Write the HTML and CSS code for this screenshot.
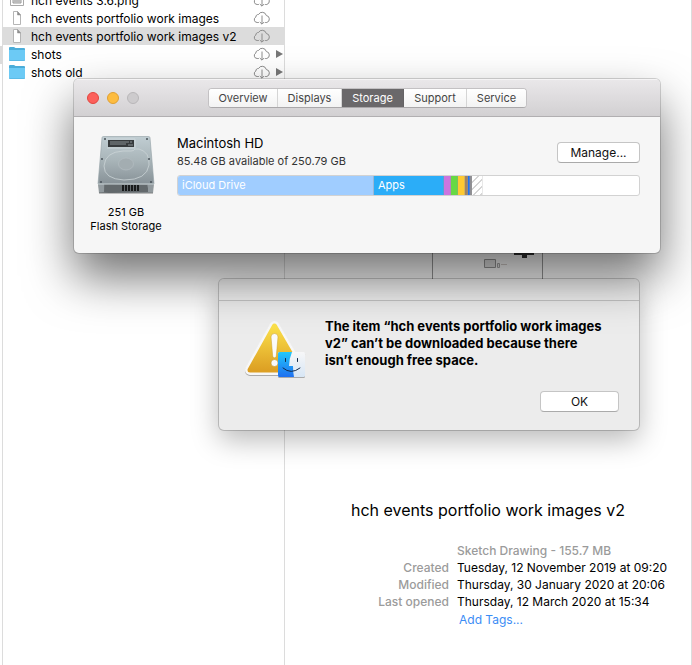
FILE: index.html
```
<!DOCTYPE html>
<html lang="en">
<head>
<meta charset="UTF-8">
<meta name="viewport" content="width=device-width, initial-scale=1.0">
<title>Storage</title>
<link rel="stylesheet" href="styles.css">
</head>
<body>
  <!-- Shared icons -->
  <svg class="defs" width="0" height="0" aria-hidden="true">
    <defs>
      <symbol id="cloud" viewBox="0 0 18 14">
        <path d="M5.800 11.500H4.200A2.900 2.900 0 0 1 2.900 6A2.300 2.300 0 0 1 5.500 3.500A4.200 4.200 0 0 1 13.300 4.500A3.600 3.600 0 0 1 13.800 11.500H12.200" fill="none" stroke="#8c8c8c"/>
        <path d="M9 4.500V13M6.800 11L9 13.200L11.200 11" fill="none" stroke="#8c8c8c"/>
      </symbol>
      <symbol id="folder" viewBox="0 0 16 14">
        <path d="M0 1a1 1 0 0 1 1-1h4l1.500 1H15a1 1 0 0 1 1 1v11a1 1 0 0 1-1 1H1a1 1 0 0 1-1-1z" fill="#4badd9"/>
        <path d="M0 3h16v9.500a1 1 0 0 1-1 1H1a1 1 0 0 1-1-1z" fill="#6ccaf5"/>
      </symbol>
      <symbol id="doc" viewBox="0 0 16 16">
        <path d="M4.500 1.500h4l3 3.500v9.500h-7z" fill="#fff" stroke="#b5b5b5"/>
        <path d="M8.500 1.500v3.500h3z" fill="#8d8d8d" stroke="#8d8d8d" stroke-width=".5"/>
      </symbol>
      <symbol id="image" viewBox="0 0 16 16">
        <path d="M1.500 1.500h13v12h-13z" fill="#fff" stroke="#a9a9a9"/>
        <path d="M4 5h8v6H4z" fill="#ddd" stroke="#999"/>
        <path d="M5 7h6M5 9h6" stroke="#999"/>
      </symbol>
    </defs>
  </svg>

  <main class="finder">
    <div class="parent-column"><div class="parent-selected"></div></div>
    <ul class="files">
      <li><svg class="file-icon"><use href="#image"/></svg><span>hch events 3.6.png</span><svg class="cloud"><use href="#cloud"/></svg></li>
      <li><svg class="file-icon"><use href="#doc"/></svg><span>hch events portfolio work images</span><svg class="cloud"><use href="#cloud"/></svg></li>
      <li class="selected"><svg class="file-icon"><use href="#doc"/></svg><span>hch events portfolio work images v2</span><svg class="cloud"><use href="#cloud"/></svg></li>
      <li class="folder"><svg class="file-icon"><use href="#folder"/></svg><span>shots</span><svg class="cloud"><use href="#cloud"/></svg></li>
      <li class="folder"><svg class="file-icon"><use href="#folder"/></svg><span>shots old</span><svg class="cloud"><use href="#cloud"/></svg></li>
    </ul>
    <section class="preview">
      <svg class="thumb" viewBox="0 0 112 260">
        <path d="M.5.5h110v259H.5z" fill="#fff" stroke="#999"/>
        <path d="M82 153h20v6H95v3h-5v-3h-8z" fill="#333"/>
        <path d="M52.500 163.500h11v8h-11z" fill="#e6e6e6" stroke="#999"/>
        <path d="M65.500 167.500h2v4h-2z" fill="#eee" stroke="#aaa"/>
        <path d="M69 168.500h6" stroke="#d6d0cc"/>
      </svg>
      <h1>hch events portfolio work images v2</h1>
      <dl>
        <dt></dt><dd class="kind">Sketch Drawing - 155.7 MB</dd>
        <dt>Created</dt><dd>Tuesday, 12 November 2019 at 09:20</dd>
        <dt>Modified</dt><dd>Thursday, 30 January 2020 at 20:06</dd>
        <dt>Last opened</dt><dd>Thursday, 12 March 2020 at 15:34</dd>
        <dt></dt><dd class="tags"><a href="#">Add Tags...</a></dd>
      </dl>
    </section>
  </main>

  <!-- Download error -->
  <section class="window alert" role="alertdialog" aria-labelledby="alertText">
    <div class="alert-bar"></div>
    <div class="alert-body">
      <svg class="alert-icon" viewBox="0 0 64 62">
        <defs>
          <linearGradient id="yellow" x2="0" y2="1"><stop stop-color="#fbe04a"/><stop offset="1" stop-color="#dda024"/></linearGradient>
          <linearGradient id="blue" x2="0" y2="1"><stop stop-color="#22c8fb"/><stop offset="1" stop-color="#1f70f0"/></linearGradient>
          <linearGradient id="pale" x2="0" y2="1"><stop stop-color="#f7f7f8"/><stop offset="1" stop-color="#d7e6f5"/></linearGradient>
        </defs>
        <path d="M31.500 8L57 52H7z" transform="translate(0 1)" fill="#aaa" stroke="#aaa" stroke-width="10" stroke-linejoin="round"/>
        <path d="M31.500 8L57 52H7z" fill="#f7f7f7" stroke="#f7f7f7" stroke-width="10" stroke-linejoin="round"/>
        <path d="M31.500 8L57 52H7z" fill="url(#yellow)" stroke="url(#yellow)" stroke-width="5" stroke-linejoin="round"/>
        <path d="M28 19a3.500 3.500 0 0 1 7 0L33.300 38a1.800 1.800 0 0 1-3.600 0z" fill="#fafafa" stroke="#c9a02d" stroke-width=".5"/>
        <circle cx="31.500" cy="45" r="3.500" fill="#fafafa" stroke="#b88b20" stroke-width=".5"/>
        <rect x="35" y="35" width="27" height="25" rx="1.500" fill="#aaa"/>
        <rect x="35" y="34" width="27" height="25" rx="1.500" fill="url(#pale)"/>
        <path d="M36.500 34H49q-3 7-3 14h4q0 6 1 11H36.500a1.500 1.500 0 0 1-1.500-1.500v-22a1.500 1.500 0 0 1 1.500-1.500z" fill="url(#blue)"/>
        <path d="M42.500 40.500v3M54.500 40.500v3M40 50q8 7 17 0" fill="none" stroke="#142a4a" stroke-linecap="round"/>
      </svg>
      <div class="alert-main">
        <p id="alertText">The item “hch events portfolio work images v2” can’t be downloaded because there isn’t enough free space.</p>
        <button class="button" type="button">OK</button>
      </div>
    </div>
  </section>

  <!-- About this Mac -->
  <section class="window about">
    <header class="toolbar">
      <div class="lights"><i class="close"></i><i class="minimise"></i><i class="zoom"></i></div>
      <nav class="tabs">
        <button type="button">Overview</button>
        <button type="button">Displays</button>
        <button type="button" class="active">Storage</button>
        <button type="button">Support</button>
        <button type="button">Service</button>
      </nav>
    </header>
    <div class="about-body">
      <div class="drive">
        <svg class="disk" viewBox="0 0 60 62">
          <defs>
            <linearGradient id="metal" x2="0" y2="1"><stop stop-color="#c0cdd2"/><stop offset=".5" stop-color="#a9b5b9"/><stop offset="1" stop-color="#879197"/></linearGradient>
            <linearGradient id="side" x2="1" y2="0"><stop stop-color="#80878a"/><stop offset=".2" stop-color="#62686b"/><stop offset="1" stop-color="#898f92"/></linearGradient>
          </defs>
          <path d="M3 59h54" stroke="#bbb" stroke-width="2"/>
          <path d="M2 49h56l-1 10H3z" fill="url(#side)"/>
          <path d="M9 51h42l2 7H8z" fill="#63696c"/>
          <path d="M3 50h5v8H3zM52 50h5v8h-5z" fill="#929a9e"/>
          <path d="M7.500 2.500h45a1.500 1.500 0 0 1 1.500 1.200L58 50H2L6 3.700A1.500 1.500 0 0 1 7.500 2.500z" fill="url(#metal)" stroke="#92a0a5" stroke-width=".6"/>
          <path d="M2 50h56" stroke="#d5dde0" stroke-width=".8"/>
          <path d="M10 5h29v9H11" fill="none" stroke="#d2dbde" stroke-width=".8"/>
          <path d="M39 15h4q11 3 10 16q-2 15-25 15Q8 45 8 32Q9 18 27 17h8q3 0 4-2" fill="none" stroke="#cbd4d7" stroke-width=".8"/>
          <path d="M12 6h26v7H12z" fill="#373b3d"/>
          <path d="M14 8h19M14 10h16M34 8h2M32 11h5" stroke="#889093"/>
          <ellipse cx="30" cy="30" rx="7.500" ry="6" fill="#a3adb1" stroke="#b7c0c4" stroke-width=".6"/>
          <path d="M27 51v6M30 51v6M33 51v6M36 51v6M39 51v6M42 51v6" stroke="#191b1c" stroke-width="2"/>
          <g fill="#485258"><circle cx="9" cy="5" r="1"/><circle cx="51" cy="5" r="1"/><circle cx="6" cy="25" r="1"/><circle cx="53" cy="25" r="1"/><circle cx="5" cy="48" r="1"/><circle cx="55" cy="48" r="1"/></g>
        </svg>
        <p>251 GB<br>Flash Storage</p>
      </div>
      <div class="volume">
        <div class="volume-head">
          <div>
            <h2>Macintosh HD</h2>
            <p>85.48 GB available of 250.79 GB</p>
          </div>
          <button class="button" type="button">Manage...</button>
        </div>
        <div class="usage">
          <span class="icloud">iCloud Drive</span>
          <span class="apps">Apps</span>
          <span class="photos"></span>
          <span class="messages"></span>
          <span class="music"></span>
          <span class="books"></span>
          <span class="mail"></span>
          <span class="system"></span>
          <span class="purgeable"></span>
        </div>
      </div>
    </div>
  </section>
</body>
</html>
```
FILE: styles.css
```
* { box-sizing: border-box; }
body { margin: 0; height: 100vh; overflow: hidden; position: relative; background: #fff; color: #000; font-family: Inter, "Liberation Sans", sans-serif; font-size: 12px; line-height: 17px; }
h1, h2, p, ul, dl, dd { margin: 0; padding: 0; font-weight: normal; }
button { font-family: inherit; }
.defs { position: absolute; }

/* Finder columns */
.finder { display: flex; height: 100%; overflow: hidden; border-right: 1px solid #dcdcdc; }
.parent-column { width: 3px; border-right: 1px solid #dcdcdc; padding-top: 46px; }
.parent-selected { height: 18px; background: #dcdcdc; }
.files { width: 282px; margin-top: -9px; border-right: 1px solid #dcdcdc; list-style: none; }
.files li { display: flex; align-items: center; height: 18px; padding: 0 13px 0 6px; }
.files span { flex: 1; white-space: nowrap; }
.files .selected { background: #dcdcdc; }
.file-icon { width: 16px; height: 16px; margin-right: 6px; }
.cloud { width: 18px; height: 14px; }
.folder { position: relative; }
.folder::after { content: ""; position: absolute; right: 1px; top: 5px; border: solid transparent; border-width: 4px 0 4px 7px; border-left-color: #777; }
.preview { flex: 1; display: flex; flex-direction: column; align-items: center; padding-top: 96px; }
.thumb { width: 112px; height: 260px; margin-bottom: 142px; }
.preview h1 { font-size: 16px; line-height: 24px; }
dl { display: grid; grid-template-columns: 164px 1fr; column-gap: 8px; width: 100%; margin-top: 20px; white-space: nowrap; }
dt { color: #9b9b9b; text-align: right; font-weight: 500; }
.kind { color: #9b9b9b; font-weight: 500; }
.tags { padding: 1px 2px; }
.tags a { color: #3b8cf5; text-decoration: none; }

/* Windows */
.window { position: absolute; border-radius: 5px; overflow: hidden; }
.button { height: 21px; padding: 0; border: 1px solid #c5c5c5; border-bottom-color: #aaa; border-radius: 4px; background: #fff; color: #111; font-size: 12px; line-height: 19px; }

.alert { left: 219px; top: 279px; width: 420px; background: #ececec; box-shadow: 0 0 0 1px rgba(0,0,0,.18), 0 10px 28px rgba(0,0,0,.28); }
.alert-bar { height: 22px; border-bottom: 1px solid #c4c4c4; background: #f0f0f0; }
.alert-body { display: flex; padding: 17px 20px 18px 24px; }
.alert-icon { width: 64px; height: 62px; }
.alert-main { flex: 1; display: flex; flex-direction: column; align-items: flex-end; margin-left: 18px; }
.alert-main p { width: 100%; padding-right: 14px; font-size: 13px; font-weight: 700; }
.alert-main .button { width: 79px; margin-top: 22px; }

.about { left: 74px; top: 79px; width: 586px; background: #f6f6f6; box-shadow: 0 0 0 1px rgba(0,0,0,.16), 0 24px 48px rgba(0,0,0,.56); }
.toolbar { display: flex; height: 38px; padding: 9px 19px 0 13px; border-bottom: 1px solid #b1afb1; background: linear-gradient(#eae8ea, #d2d0d2); box-shadow: inset 0 1px #f5f4f5; }
.lights { display: flex; gap: 8px; width: 121px; padding-top: 4px; }
.lights i { width: 12px; height: 12px; border: 1px solid #e2463f; border-radius: 50%; background: #fc605b; }
.lights .minimise { border-color: #e0a033; background: #fdbc40; }
.lights .zoom { border-color: #b9b7b9; background: #cdcbcd; }
.tabs { display: flex; height: 20px; border: 1px solid #c3c1c3; border-bottom-color: #aaa8aa; border-radius: 4px; overflow: hidden; background: #fff; }
.tabs button { width: 62px; padding: 0; border: 0; border-right: 1px solid #d5d5d5; background: linear-gradient(#fff, #f3f3f3); color: #444; font-size: 11px; }
.tabs button:nth-child(1) { width: 69px; }
.tabs button:nth-child(2) { width: 64px; }
.tabs button:nth-child(4) { width: 63px; }
.tabs button:last-child { width: 59px; border-right: 0; }
.tabs .active { border-color: #656365; background: #6a686a; color: #fff; }

.about-body { display: flex; padding: 17px 20px 20px 11px; }
.drive { width: 82px; text-align: center; font-size: 11px; line-height: 14px; }
.disk { display: block; width: 60px; height: 62px; margin: 0 auto 9px; }
.volume { flex: 1; margin-left: 10px; }
.volume-head { display: flex; justify-content: space-between; height: 41px; }
.volume-head h2 { font-size: 13px; line-height: 18px; }
.volume-head p { color: #333; font-size: 11px; line-height: 18px; }
.volume-head .button { width: 83px; margin-top: 8px; }
.usage { display: flex; height: 21px; border: 1px solid #d2d2d2; border-radius: 3px; overflow: hidden; background: #fff; color: #fff; font-size: 11px; line-height: 19px; }
.usage span { width: 7px; border-right: 1px solid rgba(150,150,150,.4); }
.usage .icloud { width: 196px; padding-left: 4px; background: #a0cdff; }
.usage .apps { width: 70px; padding-left: 4px; background: #2badf8; }
.photos { background: #cb75df; }
.messages { background: #67d944; }
.music { background: #ffca32; }
.usage .books { width: 3px; background: #a28462; }
.usage .mail { width: 2px; background: #1b72f5; }
.usage .system { width: 2px; background: #8e8e93; }
.usage .purgeable { width: 11px; border-color: #e8e8e8; background: repeating-linear-gradient(135deg, #fff 0 4px, #d5d5d5 4px 5px); }
```
